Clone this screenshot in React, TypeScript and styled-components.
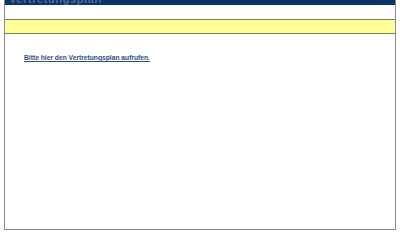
import React from "react";
import styled, {createGlobalStyle} from "styled-components";

const GlobalStyle = createGlobalStyle`
  html, body {
    margin: 0;
    padding: 0;
    background-color: #fff;
    font-family: "Liberation Sans", Arial, sans-serif;
  }
`

function App() {
    return (
        <>
            <GlobalStyle/>
            <PageWrap>
                <Header>
                    <HeaderTitle>Vertretungsplan</HeaderTitle>
                </Header>
                <Spacer/>
                <InfoBar/>
                <Content>
                    <PlanLink href="#">Bitte hier den Vertretungsplan aufrufen.</PlanLink>
                </Content>
            </PageWrap>
        </>
    )
}

export default App;

const PageWrap = styled.div`
  width: 390px;
  height: 229px;
  margin-left: 4px;
  border: 1px solid #8a8a8a;
  border-top: none;
  display: flex;
  flex-direction: column;
  background-color: #fff;
`
const Header = styled.div`
  height: 5px;
  background-color: #0b3468;
  overflow: hidden;
  display: flex;
  align-items: flex-end;
  padding-left: 4px;
`
const HeaderTitle = styled.div`
  font-size: 11px;
  font-weight: bold;
  line-height: 11px;
  color: #4f6c96;
  margin-bottom: 0;
  letter-spacing: 0.6px;
`
const Spacer = styled.div`
  height: 14px;
`
const InfoBar = styled.div`
  height: 13px;
  background-color: #ffff99;
  border-top: 1px solid #7d7d5a;
  border-bottom: 1px solid #7d7d5a;
`
const Content = styled.div`
  padding: 20px 0 0 19px;
  font-size: 7px;
  line-height: 7px;
`
const PlanLink = styled.a`
  font-size: 6.7px;
  font-weight: bold;
  color: #2f4e78;
  text-decoration: underline;
`
